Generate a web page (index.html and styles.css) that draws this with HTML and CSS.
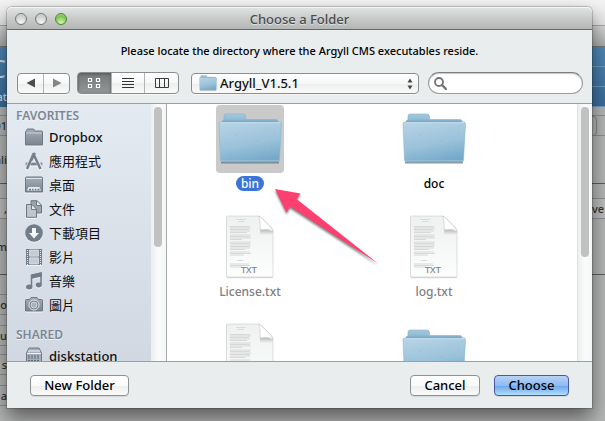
FILE: index.html
```html
<!DOCTYPE html>
<html lang="en">
<head>
<meta charset="utf-8">
<title>Choose a Folder</title>
<link rel="stylesheet" href="styles.css">
</head>
<body>
<svg class="defs" width="0" height="0" aria-hidden="true">
  <defs>
    <linearGradient id="blue" x1="0.3" y1="0" x2="0.6" y2="1"><stop offset="0" stop-color="#b4d2e5"/><stop offset="0.55" stop-color="#9bc2da"/><stop offset="1" stop-color="#74a9c9"/></linearGradient>
    <linearGradient id="back" gradientUnits="userSpaceOnUse" x1="0" y1="9" x2="0" y2="19"><stop offset="0" stop-color="#a3c8dd"/><stop offset="0.5" stop-color="#93bdd6"/><stop offset="0.85" stop-color="#6d9fbf"/></linearGradient>
    <linearGradient id="steel" x1="0" y1="0" x2="0" y2="1"><stop offset="0" stop-color="#a5adb7"/><stop offset="1" stop-color="#7a8592"/></linearGradient>
    <linearGradient id="paper" x1="0" y1="0" x2="0" y2="1"><stop offset="0" stop-color="#eff0f0"/><stop offset="1" stop-color="#fcfdfd"/></linearGradient>
    <linearGradient id="curl" x1="0" y1="1" x2="0.5" y2="0.5"><stop offset="0" stop-color="#e2e4e4"/><stop offset="0.5" stop-color="#ffffff"/></linearGradient>
    <linearGradient id="shade" x1="0" y1="0" x2="0" y2="1"><stop offset="0" stop-color="#a9abab"/><stop offset="1" stop-color="#f3f4f4"/></linearGradient>
    <symbol id="folder" viewBox="0 0 68 68">
      <path d="M5 57h58v1.500H5z" fill="#5f6468" opacity=".7"/>
      <path d="M6 19V16l2-1.500V11q0-2 2-2H27q2.500 0 2.500 2.500V14.500h30.500q2 0 2 2v3z" fill="url(#back)" stroke="#86b2cc" stroke-width=".6"/>
      <path d="M3 19q0-2 2-2h58.500q2 0 2 2L63.500 55q0 2-2 2H6.500q-2 0-2-2z" fill="url(#blue)" stroke="#8ab7d0" stroke-width=".6"/>
      <path d="M4.500 17.800h59.500" stroke="#cfe2ee" stroke-width=".8"/>
      <path d="M5 55.500h58" stroke="#93c2dd" stroke-width=".8"/>
      <path d="M20 30h1M50 23h1M41 36h1M55 41h1M29 46h1M58 29h1M14 49h1M46 52h1" stroke="#6b9dbb" stroke-width=".6" opacity=".7"/>
    </symbol>
    <symbol id="doc" viewBox="0 0 68 68">
      <path d="M10.500 4.500q0-1 1-1H44L57 17V63.500q0 1-1 1H11.500q-1 0-1-1z" fill="#777" opacity=".3" transform="translate(0 .8)"/>
      <path d="M10.500 4q0-1 1-1H41Q44 3 46 5L55 14Q57 16 57 19V63q0 1-1 1H11.500q-1 0-1-1z" fill="url(#paper)" stroke="#cfd1d1" stroke-width=".7"/>
      <path d="M44 17Q52 15.500 57 18.500V22H44z" fill="url(#shade)" opacity=".8"/>
      <path d="M42.500 3Q44.500 5 44 17.200Q52 15 57 18.500Q56 15.500 54.500 14L46 5.500Q44 3.200 42.500 3z" fill="url(#curl)" stroke="#bfc1c1" stroke-width=".5"/>
      <path d="M20 6.500h10M22 8.500h6" stroke="#d3d5d5" stroke-width=".8"/>
      <path d="M14 13.500h20M14 15h21M14 16.500h19M14 18h20M14 19.500h17M14 22h21M14 23.500h20M14 25h21M14 26.500h12M14 29h21M14 30.500h20M14 32h21M14 33.500h20M14 35h20M14 36.500h15M14 39h20M14 40.500h21M14 42h14M21 47.500h6M14 51h19M14 52.500h20M14 54h12" stroke="#cfd1d1" stroke-width=".8"/>
    </symbol>
    <symbol id="smallfolder" viewBox="0 0 18 18">
      <path d="M.5 17V4Q.5 3 1.500 3V2.500Q1.500 1 3 1H8Q9.500 1 9.500 2.500V3H16.500Q17.500 3 17.500 4V17z" fill="url(#steel)" stroke="#6d7885"/>
      <path d="M1 5h16" stroke="#c8cfd7"/>
    </symbol>
  </defs>
</svg>

<main class="screen">
  <div class="page" aria-hidden="true">
    <div class="row chrome"></div>
    <div class="row bar"></div>
    <div class="row hero"><b>C</b><small>at</small></div>
    <div class="row h9"></div>
    <div class="row h20 field"><span>01</span><i></i></div>
    <div class="row h48 dark"><span>ali</span></div>
    <div class="row h15"></div>
    <div class="row h20 band"><span>,</span><span>ve</span></div>
    <div class="row h56 dark"><span>m</span></div>
    <div class="rows">
      <div class="row h20"></div>
      <div class="row h20"><span>o</span></div>
      <div class="row h12"></div>
      <div class="row h20"><span>u</span></div>
      <div class="row h9"></div>
      <div class="row h20"><span>s</span></div>
      <div class="row h12"></div>
      <div class="row h20"><span>a</span></div>
    </div>
  </div>

  <section class="dialog" role="dialog" aria-labelledby="title">
    <header class="titlebar">
      <div class="lights">
        <button class="light" aria-label="Close"></button>
        <button class="light" aria-label="Minimize"></button>
        <button class="light green" aria-label="Zoom"></button>
      </div>
      <h1 id="title">Choose a Folder</h1>
    </header>
    <p class="message">Please locate the directory where the Argyll CMS executables reside.</p>

    <div class="toolbar">
      <div class="group nav">
        <button aria-label="Back"><svg width="10" height="10" viewBox="0 0 10 10"><path d="M9 .5V9.500L.5 5z" fill="#4c4c4c"/></svg></button>
        <button aria-label="Forward"><svg width="10" height="10" viewBox="0 0 10 10"><path d="M1 .5V9.500L9.500 5z" fill="#858585"/></svg></button>
      </div>
      <div class="group views">
        <button class="on" aria-label="Icons"><svg width="14" height="12" viewBox="0 0 14 12"><path d="M1.500 1.500h3v3h-3zM9.500 1.500h3v3h-3zM1.500 7.500h3v3h-3zM9.500 7.500h3v3h-3z" fill="#777" stroke="#fff" stroke-width="1.200"/></svg></button>
        <button aria-label="List"><svg width="12" height="12" viewBox="0 0 12 12"><path d="M0 1.500h12M0 4.500h12M0 7.500h12M0 10.500h12" stroke="#333"/></svg></button>
        <button aria-label="Columns"><svg width="14" height="12" viewBox="0 0 14 12"><path d="M.5 1.500h13v9H.5zM4.500 1v9M9.500 1v9" fill="none" stroke="#3c3c3c"/></svg></button>
      </div>
      <div class="popup">
        <svg class="mini" width="18" height="16" viewBox="2 8 64 52" preserveAspectRatio="none" aria-hidden="true"><use href="#folder" width="68" height="68"/></svg>
        <select aria-label="Location"><option>Argyll_V1.5.1</option></select>
        <svg class="updown" width="6" height="12" viewBox="0 0 6 12" aria-hidden="true"><path d="M3 .5L5.500 4.500H.5zM3 11.500L5.500 7.500H.5z" fill="#444"/></svg>
      </div>
      <div class="search">
        <svg width="13" height="13" viewBox="0 0 13 13" aria-hidden="true"><circle cx="5" cy="5" r="4" fill="none" stroke="#737373" stroke-width="1.800"/><path d="M8 8l4 4" stroke="#737373" stroke-width="2.400" stroke-linecap="round"/></svg>
        <input type="search" aria-label="Search">
      </div>
    </div>

    <div class="browser">
      <nav class="sidebar">
        <h2>FAVORITES</h2>
        <a href="#"><svg viewBox="0 0 18 18"><use href="#smallfolder"/></svg>Dropbox</a>
        <a href="#" lang="zh-TW"><svg viewBox="0 0 18 18"><path d="M.5 10.500H17.500V13.500H.5z" fill="#8e98a4"/><path d="M8.500 2.500L2 17M8.500 2L16 17" stroke="#dfe6ee" stroke-width="4" fill="none"/><path d="M8 3L2 17M8 1l7.500 16" stroke="#74808d" stroke-width="2.400" fill="none"/><path d="M10 1L6.500 8.500" stroke="#74808d" stroke-width="2"/><path d="M5.500 12h6" stroke="#74808d" stroke-width="1.500"/></svg>應用程式</a>
        <a href="#" lang="zh-TW"><svg viewBox="0 0 18 18"><path d="M.5 2Q.5 1 1.500 1H16.500Q17.500 1 17.500 2V16H.5z" fill="url(#steel)" stroke="#6d7885"/><path d="M1 2.500h16" stroke="#dce3ea"/><path d="M3.500 11h11l1.500 3.500H2z" fill="#e6ebf0"/><path d="M4 13.500h2M7 13.500h1.500M9.800 13.500h1.500M12.500 13.500h2" stroke="#6d7885" stroke-width="1.500"/></svg>桌面</a>
        <a href="#" lang="zh-TW"><svg viewBox="0 0 18 18"><path d="M6 .7h6L16.500 5V13H6z" fill="#9aa4af" stroke="#6d7885"/><path d="M11.500 1v4.500H16" fill="#e6ebf0" stroke="#6d7885"/><path d="M1.500 4.500H7L11.500 9V17.300H1.500z" fill="#bdc5cd" stroke="#6d7885"/><path d="M6.500 5v4.500H11" fill="#e6ebf0" stroke="#6d7885"/></svg>文件</a>
        <a href="#" lang="zh-TW"><svg viewBox="0 0 18 18"><circle cx="9" cy="9" r="8.800" fill="#717d8a"/><path d="M7 4h4v5h3L9 14.500 4 9h3z" fill="#f5f8fa"/></svg>下載項目</a>
        <a href="#" lang="zh-TW"><svg viewBox="0 0 18 18"><path d="M1 1h16v16H1z" fill="#717d8a"/><path d="M2.500 2v15M15.500 2v15" stroke="#e4e9ee" stroke-dasharray="1 1"/><path d="M4.500 2h9v6.200h-9zM4.500 9.800h9V16h-9z" fill="#c5ccd4" stroke="#e4e9ee" stroke-width=".7"/></svg>影片</a>
        <a href="#" lang="zh-TW"><svg viewBox="0 0 18 18"><path d="M6 3.500L16 1V12.500M6.500 3V15" fill="none" stroke="#717d8a" stroke-width="1.600"/><path d="M6 2.500L16.800 .5V4.500L6 7z" fill="#717d8a"/><ellipse cx="4.200" cy="15" rx="3.200" ry="2.500" fill="#717d8a"/><ellipse cx="13.800" cy="13" rx="3" ry="2.400" fill="#717d8a"/></svg>音樂</a>
        <a href="#" lang="zh-TW"><svg viewBox="0 0 18 18"><path d="M.5 4.500Q.5 3.500 1.500 3.500H4.500L6 1.500H12L13.500 3.500H16.500Q17.500 3.500 17.500 4.500V15H.5z" fill="url(#steel)" stroke="#6d7885"/><circle cx="9" cy="9" r="5" fill="#74808d" stroke="#e4e9ee"/><circle cx="9" cy="9" r="3" fill="#a9b2bc" stroke="#dfe5ea" stroke-width=".8"/></svg>圖片</a>
        <h2 class="later">SHARED</h2>
        <a href="#"><svg viewBox="0 0 18 18"><path d="M4 1H14L16.500 6V18H1.500V6z" fill="#a6afb9" stroke="#6d7885"/><path d="M3 4h12M2 6.500h14" stroke="#f0f3f6"/><path d="M3 9h12M3 11h12M3 13.500h12" stroke="#5f6b78" stroke-dasharray="2 1"/></svg>diskstation</a>
      </nav>
      <div class="track"><div class="thumb side"></div></div>
      <div class="files">
        <figure class="tile selected"><svg><use href="#folder"/></svg><figcaption>bin</figcaption></figure>
        <figure class="tile"><svg><use href="#folder"/></svg><figcaption>doc</figcaption></figure>
        <figure class="tile dim"><svg viewBox="0 0 68 68"><use href="#doc"/><text x="25" y="60">TXT</text></svg><figcaption>License.txt</figcaption></figure>
        <figure class="tile dim"><svg viewBox="0 0 68 68"><use href="#doc"/><text x="25" y="60">TXT</text></svg><figcaption>log.txt</figcaption></figure>
        <figure class="tile dim"><svg><use href="#doc"/></svg></figure>
        <figure class="tile"><svg><use href="#folder"/></svg></figure>
      </div>
      <div class="track end"><div class="thumb"></div></div>
      <svg class="arrow" width="112" height="84" viewBox="0 0 112 84" aria-hidden="true"><path d="M3 3L28.500 7.500 24.500 13 106 77.500 18 20.500 14.500 26.500z" fill="#fd4070"/></svg>
    </div>

    <footer class="actions">
      <button class="push new">New Folder</button>
      <button class="push">Cancel</button>
      <button class="push primary">Choose</button>
    </footer>
  </section>
</main>
</body>
</html>
```
FILE: styles.css
```css
* { box-sizing: border-box; }
body {
  margin: 0;
  font-family: "Noto Sans", "Noto Sans CJK TC", sans-serif;
  font-size: 13px;
  font-weight: 500;
  color: #111;
}
h1, h2, p, figure { margin: 0; font-weight: 500; }
button, input, select { font: inherit; color: inherit; margin: 0; padding: 0; border: 0; background: none; }
.defs { position: absolute; }
.screen {
  position: relative;
  height: 100vh;
  overflow: hidden;
  background: #b4b6b5;
}

/* page behind the dialog */
.page { font-size: 11px; color: #333; }
.row { display: flex; align-items: center; border-bottom: 1px solid #8e908f; overflow: hidden; }
.row span { display: flex; justify-content: flex-end; width: 7px; line-height: 14px; overflow: hidden; }
.row span + span { width: 13px; margin-left: auto; justify-content: flex-start; }
.chrome { height: 26px; background: linear-gradient(#f4f4f4, #e4e4e4); border-color: #a5a5a5; }
.bar { height: 21px; background: linear-gradient(#d4d6d5, #aaacab); border-color: #777; }
.hero {
  height: 60px;
  border: 0;
  flex-direction: column;
  align-items: flex-start;
  justify-content: flex-end;
  color: #cfe0ec;
  background:
    repeating-linear-gradient(to bottom, transparent 0 19px, #6d9cc0 19px 20px) right / 50% 100% no-repeat,
    linear-gradient(#5088b6, #3a6c99);
}
.hero b { width: 6px; overflow: hidden; display: flex; justify-content: flex-end; font-size: 26px; line-height: 38px; font-weight: 400; }
.hero small { width: 7px; overflow: hidden; display: flex; justify-content: flex-end; font-size: 11px; line-height: 20px; }
.h9 { height: 9px; }
.h12 { height: 11px; }
.h15 { height: 15px; }
.h20 { height: 20px; }
.h48 { height: 48px; }
.h56 { height: 56px; }
.rows { width: 50%; }
.dark { border-color: #5c5e5d; }
.band { background: #bcbebd; }
.field i { width: 9px; height: 20px; margin: 0 8px 0 auto; border: 1px solid #858786; border-radius: 0 4px 4px 0; }

/* dialog */
.dialog {
  position: absolute;
  inset: 7px 13px 13px 7px;
  display: flex;
  flex-direction: column;
  border-radius: 5px 5px 0 0;
  background: #e9eded;
  box-shadow: 0 0 1px 1px rgba(0, 0, 0, .2), 0 10px 20px rgba(0, 0, 0, .5);
}
.titlebar {
  display: grid;
  grid-template-columns: 1fr auto 1fr;
  align-items: center;
  height: 23px;
  padding: 2px 8px 0;
  border-bottom: 1px solid #666968;
  border-radius: 5px 5px 0 0;
  background: linear-gradient(#e2e5e4, #c9cccb 50%, #b3b6b5);
  box-shadow: inset 0 1px #f3f5f5;
}
.titlebar h1 { font-size: 13px; line-height: 18px; color: #4a4c4c; text-shadow: 0 1px #e0e2e2; }
.lights { display: flex; gap: 8px; }
.light {
  width: 12px;
  height: 12px;
  border: 1px solid #747776;
  border-radius: 50%;
  background: radial-gradient(circle at 50% 85%, #f5f5f5, #c9cccb 70%, #e2e4e4);
}
.light.green { border-color: #4d8239; background: radial-gradient(circle at 50% 90%, #d8f7a8, #7cc455 65%, #a9dc90); }
.message { padding: 12px 0; font-size: 11px; line-height: 18px; text-align: center; color: #000; }

.toolbar { display: flex; align-items: center; height: 22px; margin-bottom: 9px; padding: 0 9px 0 10px; }
.group { display: flex; border: 1px solid #8b8e8e; border-radius: 4px; background: linear-gradient(#fff, #f6f7f7 50%, #eceeee 51%, #fafafa); box-shadow: 0 1px #f5f7f7; }
.group button { display: flex; flex: 1; align-items: center; justify-content: center; }
.group button + button { border-left: 1px solid #b1b4b4; }
.nav { width: 53px; height: 21px; margin-right: 7px; }
.views { width: 102px; height: 22px; margin-right: 12px; overflow: hidden; }
.views .on { background: linear-gradient(#767979, #939696); box-shadow: inset 0 1px 3px #555; }
.popup { position: relative; flex: 228; height: 21px; margin-right: 9px; }
.popup select {
  width: 100%;
  height: 21px;
  padding: 0 18px 0 28px;
  appearance: none;
  border: 1px solid #8b8e8e;
  border-radius: 4px;
  background: linear-gradient(#fff, #f6f7f7 50%, #eceeee 51%, #fafafa);
  box-shadow: 0 1px #f5f7f7;
}
.popup .mini { position: absolute; left: 8px; top: 2px; }
.popup .updown { position: absolute; right: 6px; top: 5px; }
.search {
  display: flex;
  flex: 140;
  min-width: 0;
  align-items: center;
  gap: 4px;
  height: 22px;
  padding: 0 8px 0 5px;
  border: 1px solid #9b9e9e;
  border-top-color: #7c7f7f;
  border-radius: 11px;
  background: #fff;
  box-shadow: inset 0 1px 1px #c5c7c7;
}
.search svg { flex: none; }
.search input { flex: 1; width: 0; min-width: 0; outline: 0; appearance: none; }

.browser {
  position: relative;
  display: flex;
  flex: 1;
  min-height: 0;
  overflow: hidden;
  border: solid #9c9fa0;
  border-width: 1px 0;
  background: #fff;
}
.sidebar { flex: none; width: 144px; overflow: hidden; padding-top: 3px; background: linear-gradient(#e4eaf1, #d1d8e2); }
.sidebar h2 { padding-left: 9px; font-size: 12px; line-height: 18px; font-weight: 600; color: #7b8794; text-shadow: 0 1px #f0f4f8; }
.sidebar .later { margin-top: 9px; }
.sidebar a { display: flex; align-items: center; gap: 6px; height: 24px; padding-left: 18px; line-height: 18px; color: #111; text-decoration: none; }
.sidebar a:lang(zh) { font-weight: 400; }
.sidebar svg { width: 18px; height: 18px; filter: drop-shadow(0 1px #f2f5f8); }
.track { flex: none; width: 16px; padding: 3px 3px 0; border: solid #a6a9aa; border-width: 0 1px 0 0; background: linear-gradient(to right, #eceff1, #fafbfb 50%, #f5f6f6); }
.track.end { width: 15px; border-width: 0 0 0 1px; border-color: #e0e2e2; }
.thumb { width: 8px; height: 150px; border-radius: 4px; background: #c1c1c1; }
.thumb.side { height: 140px; }
.files {
  display: grid;
  flex: 1;
  grid-template-columns: 166px 166px;
  grid-auto-rows: 86px;
  gap: 22px 18px;
  padding-top: 1px;
  overflow: hidden;
}
.tile { display: flex; flex-direction: column; align-items: center; gap: 3px; }
.tile svg { flex: none; width: 68px; height: 68px; border-radius: 4px; }
.tile text { font-family: "Open Sans", sans-serif; font-size: 9px; font-weight: 600; fill: #8a8c8c; }
.tile figcaption { padding: 0 5px; border-radius: 8px; font-size: 12px; line-height: 15px; color: #000; }
.tile.dim figcaption { color: #808080; }
.selected svg { background: #cacaca; }
.tile.selected figcaption { background: #3a75d7; color: #fff; }
.arrow { position: absolute; left: 265px; top: 82px; filter: drop-shadow(0 2px 1px rgba(0, 0, 0, .5)); }

.actions { display: flex; align-items: center; height: 46px; padding: 0 23px; }
.push {
  width: 70px;
  height: 21px;
  border: 1px solid #8f9292;
  border-radius: 4px;
  background: linear-gradient(#fff, #f9fafa 50%, #eceeee 51%, #fafafa);
  box-shadow: 0 1px #d5d8d8;
  line-height: 18px;
  color: #000;
}
.new { width: 99px; margin-right: auto; }
.primary { width: 75px; margin-left: 14px; border-color: #4d56a5; background: linear-gradient(#b9d3f5, #8ebbf1 50%, #69a6ec 51%, #b2ddfa); }
```
